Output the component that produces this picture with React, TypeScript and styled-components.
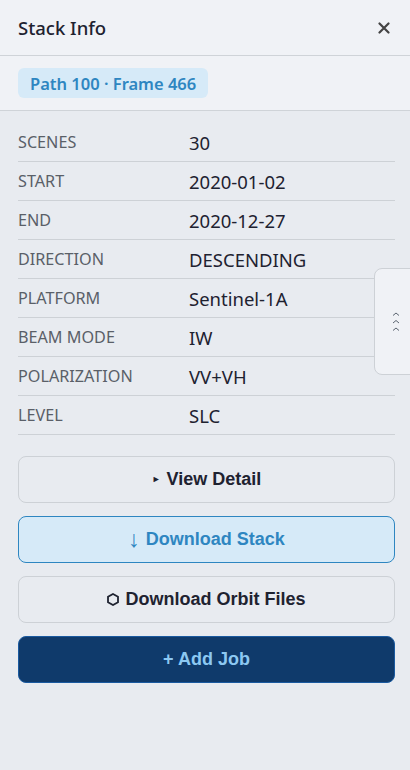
import React from "react";
import styled, { createGlobalStyle } from "styled-components";

const GlobalStyle = createGlobalStyle`
  html, body {
    margin: 0;
    padding: 0;
    background: #e8ebf0;
  }
  * {
    box-sizing: border-box;
  }
`;

const Panel = styled.div`
  position: relative;
  width: 410px;
  height: 770px;
  background-color: #e8ebf0;
  font-family: "Noto Sans", "Open Sans", sans-serif;
  color: #1e2230;
  overflow: hidden;
`;

const Header = styled.header`
  height: 56px;
  padding: 0 18px;
  display: flex;
  align-items: center;
  justify-content: space-between;
  background-color: #f0f2f6;
  border-bottom: 1px solid #cfd3d8;
`;

const Title = styled.h2`
  margin: 0;
  font-size: 18.5px;
  font-weight: 500;
  color: #1e2230;
`;

const Close = styled.button`
  border: none;
  background: none;
  padding: 0;
  width: 16px;
  height: 16px;
  display: flex;
  align-items: center;
  justify-content: center;
  cursor: pointer;
`;

const BadgeBar = styled.div`
  height: 55px;
  padding: 12px 18px 0;
  background-color: #f0f2f6;
  border-bottom: 1px solid #cfd3d8;
`;

const Badge = styled.span`
  display: inline-flex;
  align-items: center;
  height: 30px;
  padding: 0 12px;
  border-radius: 6px;
  background-color: #d6eaf8;
  color: #2e86c1;
  font-size: 16.5px;
  font-weight: 600;
`;

const Table = styled.dl`
  margin: 12px 15px 0 18px;
`;

const Row = styled.div`
  display: grid;
  grid-template-columns: 171px 1fr;
  align-items: center;
  height: 39px;
  border-bottom: 1px solid #cdd1d6;
`;

const Label = styled.dt`
  font-size: 16.2px;
  color: #5a5f68;
  text-transform: uppercase;
`;

const Value = styled.dd`
  margin: 0;
  font-size: 18.5px;
  color: #1e2230;
`;

const Actions = styled.div`
  margin: 21px 15px 0 18px;
  display: flex;
  flex-direction: column;
  gap: 13px;
`;

type variant = "plain" | "accent" | "primary";

const palette: Record<variant, { bg: string; border: string; color: string }> = {
  plain: { bg: "#e8ebf0", border: "#cdd1d6", color: "#1e2230" },
  accent: { bg: "#d6eaf8", border: "#2e86c1", color: "#2e86c1" },
  primary: { bg: "#0f3a6b", border: "#1a5aa0", color: "#8cc8f2" },
};

const ActionButton = styled.button<{ $variant: variant }>`
  height: 47px;
  width: 100%;
  border-radius: 8px;
  border: 1px solid ${({ $variant }) => palette[$variant].border};
  background-color: ${({ $variant }) => palette[$variant].bg};
  color: ${({ $variant }) => palette[$variant].color};
  font-family: "Liberation Sans", Arial, sans-serif;
  font-size: 18px;
  font-weight: 700;
  display: flex;
  align-items: center;
  justify-content: center;
  gap: 6px;
  cursor: pointer;
`;

const Glyph = styled.span<{ $size?: string }>`
  font-size: ${({ $size }) => $size || "12px"};
  font-weight: 400;
  line-height: 1;
`;

const SideTab = styled.div`
  position: absolute;
  top: 268px;
  left: 374px;
  width: 44px;
  height: 107px;
  border: 1px solid #cdd1d6;
  border-radius: 8px 0 0 8px;
  background-color: #f0f2f6;
  display: flex;
  align-items: center;
  padding-left: 17px;
`;

const rows: [string, string][] = [
  ["Scenes", "30"],
  ["Start", "2020-01-02"],
  ["End", "2020-12-27"],
  ["Direction", "DESCENDING"],
  ["Platform", "Sentinel-1A"],
  ["Beam Mode", "IW"],
  ["Polarization", "VV+VH"],
  ["Level", "SLC"],
];

function Chevrons() {
  return (
    <svg width="8" height="22" viewBox="0 0 8 22" fill="none" stroke="#5a6470" strokeWidth="1">
      <path d="M1 4.5 L4 2 L7 4.5" />
      <path d="M1 12 L4 9.5 L7 12" />
      <path d="M1 19.5 L4 17 L7 19.5" />
    </svg>
  );
}

export default function App() {
  return (
    <>
      <GlobalStyle />
      <Panel>
        <Header>
          <Title>Stack Info</Title>
          <Close aria-label="close">
            <svg width="12" height="12" viewBox="0 0 12 12" stroke="#444" strokeWidth="2.2" strokeLinecap="round">
              <path d="M1.5 1.5 L10.5 10.5 M10.5 1.5 L1.5 10.5" />
            </svg>
          </Close>
        </Header>
        <BadgeBar>
          <Badge>Path 100 · Frame 466</Badge>
        </BadgeBar>
        <Table>
          {rows.map(([label, value]) => (
            <Row key={label}>
              <Label>{label}</Label>
              <Value>{value}</Value>
            </Row>
          ))}
        </Table>
        <Actions>
          <ActionButton $variant="plain">
            <Glyph $size="9px">►</Glyph> View Detail
          </ActionButton>
          <ActionButton $variant="accent">
            <Glyph $size="23px">↓</Glyph>Download Stack
          </ActionButton>
          <ActionButton $variant="plain">
            <svg width="12" height="13" viewBox="0 0 12 13" fill="none" stroke="#1e2230" strokeWidth="1.8">
              <path d="M6 1 L11 3.8 L11 9.2 L6 12 L1 9.2 L1 3.8 Z" />
            </svg>
            Download Orbit Files
          </ActionButton>
          <ActionButton $variant="primary">+ Add Job</ActionButton>
        </Actions>
        <SideTab>
          <Chevrons />
        </SideTab>
      </Panel>
    </>
  );
}
